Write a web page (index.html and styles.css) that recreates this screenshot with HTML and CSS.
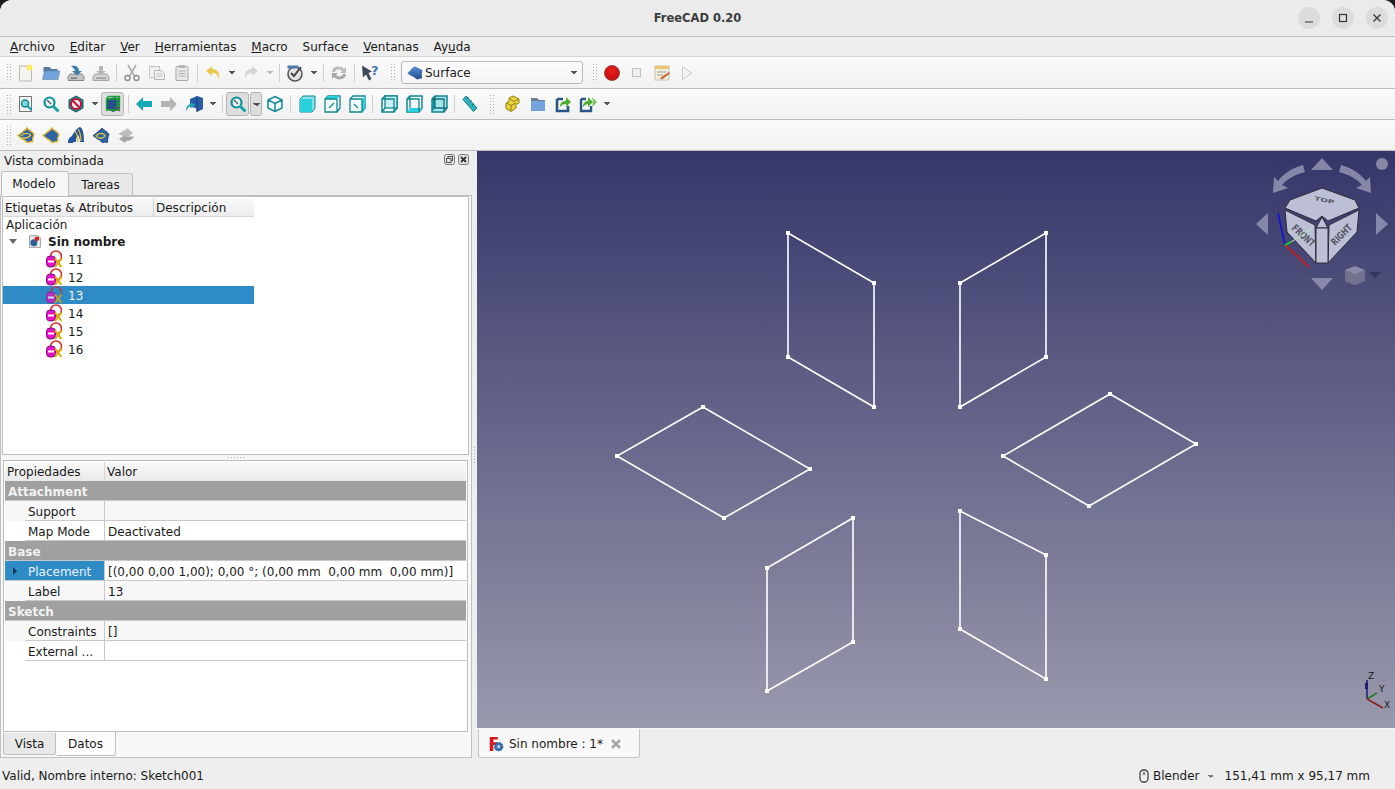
FILE: index.html
```html
<!DOCTYPE html>
<html lang="es">
<head>
    <meta charset="UTF-8">
    <title>FreeCAD 0.20</title>
    <link rel="stylesheet" href="styles.css">
</head>
<body>

<svg class="defs" width="0" height="0">
    <defs>
        <linearGradient id="flag" x1="0" y1="0" x2="0" y2="1"><stop offset="0" stop-color="#5c8fd6"/><stop offset="1" stop-color="#1f4f8f"/></linearGradient>
        <symbol id="i-new" viewBox="0 0 18 18"><rect x="2.500" y="2" width="12" height="15" fill="#f4f3ee" stroke="#b8b8b8"/><circle cx="12.500" cy="3.500" r="3" fill="#ffe95c"/></symbol>
        <symbol id="i-open" viewBox="0 0 18 18"><path d="M1.500 3h6l2 2h6v3h-14z" fill="#56799f"/><path d="M2.500 7H18l-2 8.500H.5z" fill="#74a4dc" stroke="#5d86b5" stroke-width=".6"/></symbol>
        <symbol id="i-save" viewBox="0 0 18 18"><path d="M3 10h12l2 3v3.500H1V13z" fill="#c4c4c4" stroke="#8a8a8a"/><rect x="4" y="13.500" width="6" height="1.500" fill="#777"/><path d="M4 2c5-1 8 1 8 5h3l-5 4.500L5 7h3c0-2-2-3-4-5z" fill="#3d7bb0"/></symbol>
        <symbol id="i-saveas" viewBox="0 0 18 18"><path d="M3 10h12l2 3v3.500H1V13z" fill="#d2d2d2" stroke="#a5a5a5"/><rect x="4" y="13.500" width="10" height="1.500" fill="#9a9a9a"/><path d="M7 2h4v5h3l-5 4-5-4h3z" fill="#b5b5b5"/></symbol>
        <symbol id="i-cut" viewBox="0 0 18 18"><path d="M5 1l7 12M13 1L6 13" stroke="#adadad" stroke-width="1.6" fill="none"/><circle cx="4.500" cy="14" r="2.500" fill="none" stroke="#8f8f8f" stroke-width="1.400"/><circle cx="13.500" cy="14" r="2.500" fill="none" stroke="#8f8f8f" stroke-width="1.400"/></symbol>
        <symbol id="i-copy" viewBox="0 0 18 18"><rect x="1.500" y="2.500" width="10" height="11" fill="#f0f0f0" stroke="#c4c4c4"/><path d="M6.500 6.500h7l3 3v6h-10z" fill="#efefef" stroke="#b5b5b5"/><path d="M8.500 10h6M8.500 12h6" stroke="#c4c4c4"/></symbol>
        <symbol id="i-paste" viewBox="0 0 18 18"><rect x="3" y="2.500" width="12" height="14" rx="1" fill="#e8e8e6" stroke="#a5a5a5"/><rect x="6" y="1" width="6" height="3" fill="#b5b5b5"/><path d="M5.500 7h7M5.500 9.500h7M5.500 12h7" stroke="#b0b0b0"/></symbol>
        <symbol id="i-undo" viewBox="0 0 18 18"><path d="M2 7l6-5v3c5 0 8 3 7 10-1-4-3-6-7-6v3z" fill="#ecc84a" stroke="#e6e2b0" stroke-width=".6"/></symbol>
        <symbol id="i-redo" viewBox="0 0 18 18"><path d="M16 7l-6-5v3C5 5 2 8 3 15c1-4 3-6 7-6v3z" fill="#d5d5d5"/></symbol>
        <symbol id="i-check" viewBox="0 0 18 18"><circle cx="9" cy="10" r="7" fill="#e4e4e4" stroke="#555" stroke-width="1.600"/><path d="M1.500 1.500h11v3h-11z" fill="#4d78a8"/><path d="M5 9l3 3 7-9" fill="none" stroke="#444" stroke-width="2"/></symbol>
        <symbol id="i-refresh" viewBox="0 0 18 18"><path d="M2 8c0-6 9-7 12-3l2-2v6h-6l2-2c-2-2-6-2-7 1z" fill="#bdbdbd"/><path d="M16 10c0 6-9 7-12 3l-2 2V9h6l-2 2c2 2 6 2 7-1z" fill="#a8a8a8"/></symbol>
        <symbol id="i-what" viewBox="0 0 18 18"><path d="M1 1.500l10 6-3.500 1.500 3 6-2.500 1.500-3-6-3 3z" fill="#3e4a57"/><text x="10" y="11" class="qmark">?</text></symbol>
        <symbol id="i-surface" viewBox="0 0 18 18"><path d="M.5 9C3 8 5 3 9 1.500c2 2 5 2 8.500 4.500-1 3-1 6-.5 9-3 .5-5 2-7 .5C8 13 3 12 .5 9z" fill="url(#flag)"/></symbol>
        <symbol id="i-macro-edit" viewBox="0 0 18 18"><rect x="2" y="2" width="14" height="14" fill="#f2efe0" stroke="#c9c4b0"/><rect x="2" y="2" width="14" height="3" fill="#e9c46a"/><path d="M4 8h9M4 11h6" stroke="#9a9a90"/><path d="M7 14l9-6 1 1.500-8 6z" fill="#c9662f"/></symbol>
        <symbol id="i-play" viewBox="0 0 18 18"><path d="M4.500 2.500l9 6.500-9 6.500z" fill="#f4f4f4" stroke="#c8c8c8"/></symbol>

        <symbol id="i-fitall" viewBox="0 0 18 18"><rect x="2.500" y="1.500" width="12" height="15" fill="#f3f3f3" stroke="#777"/><circle cx="8" cy="8.500" r="3.500" fill="#7fd5dc" stroke="#138a94" stroke-width="1.500"/><path d="M10.500 11l4 4" stroke="#17a3ad" stroke-width="2.400"/></symbol>
        <symbol id="i-fitsel" viewBox="0 0 18 18"><circle cx="7.500" cy="7.500" r="5" fill="#eaf6f6" stroke="#0f8f9a" stroke-width="2.200"/><path d="M11 11l5.500 5.500" stroke="#17a3ad" stroke-width="3"/><path d="M5 5l4 4" stroke="#555" stroke-width="1.200"/></symbol>
        <symbol id="i-nodraw" viewBox="0 0 18 18"><path d="M9 1l7 4v8l-7 4-7-4V5z" fill="#1d8994" stroke="#0c5d66"/><circle cx="9" cy="9" r="5" fill="#eee" stroke="#c8102e" stroke-width="2"/><path d="M5.500 5.500l7 7" stroke="#c8102e" stroke-width="2"/></symbol>
        <symbol id="i-bbox" viewBox="0 0 18 18"><path d="M3 4l8-2 5 3v9l-7 3-6-3z" fill="#26508c"/><path d="M2.500 4h11v11h-11zM13.500 4l2-2.500M2.500 4l2-2.500h11v11l-2 2.500" fill="none" stroke="#1ea02e" stroke-width="1.400"/><path d="M11 11l5 5" stroke="#555" stroke-width="1.600"/></symbol>
        <symbol id="i-back" viewBox="0 0 18 18"><path d="M1 9l7-7v4h9v6H8v4z" fill="#18a9b8"/></symbol>
        <symbol id="i-fwd" viewBox="0 0 18 18"><path d="M17 9l-7-7v4H1v6h9v4z" fill="#b5b5b5"/></symbol>
        <symbol id="i-sync" viewBox="0 0 18 18"><path d="M5 4l7-3 6 2v11l-6 3-1-4-6-1z" fill="#2a5ca8"/><path d="M12 1.500v15.500" stroke="#163c78"/><path d="M1 16c0-4 2-7 5-7V7l4 3-4 3v-2c-2 0-3 2-5 5z" fill="#1ea6b5"/></symbol>
        <symbol id="i-iso" viewBox="0 0 18 18"><path d="M9 1.500l7 3.500v8l-7 3.500L2 13V5zM2 5l7 3.500L16 5M9 8.500v8" fill="#f2fbfb" stroke="#128692" stroke-width="1.500"/></symbol>
        <symbol id="i-front" viewBox="0 0 18 18"><path d="M2 4l3-3h12v12l-3 4H2z" fill="#85e2e8" stroke="#128692"/><rect x="2" y="4" width="12" height="13" fill="#2ad1dd"/></symbol>
        <symbol id="i-top" viewBox="0 0 18 18"><path d="M2 4l3-3h12v12l-3 4H2z" fill="#f2fbfb" stroke="#128692" stroke-width="1.300"/><path d="M2 4l3-3h12l-3 3z" fill="#2ad1dd"/><path d="M14 4v13M2 4h12M6 13l5-5" stroke="#128692" stroke-width="1.300" fill="none"/></symbol>
        <symbol id="i-right" viewBox="0 0 18 18"><path d="M2 4l3-3h12v12l-3 4H2z" fill="#f2fbfb" stroke="#128692" stroke-width="1.300"/><path d="M14 4l3-3v12l-3 4z" fill="#2ad1dd"/><path d="M14 4v13M2 4h12M6 9l4 4" stroke="#128692" stroke-width="1.300" fill="none"/></symbol>
        <symbol id="i-rear" viewBox="0 0 18 18"><path d="M2 4l3-3h12v12l-3 4H2z" fill="#f2fbfb" stroke="#128692" stroke-width="1.500"/><rect x="5" y="1" width="12" height="12" fill="#c8eff2" stroke="#128692" stroke-width="1.300"/><path d="M2 4h12v13M2 17l3-4" fill="none" stroke="#128692" stroke-width="1.300"/></symbol>
        <symbol id="i-bottom" viewBox="0 0 18 18"><path d="M2 4l3-3h12v12l-3 4H2z" fill="#f2fbfb" stroke="#128692" stroke-width="1.500"/><path d="M2 17l3-4h12l-3 4z" fill="#2ad1dd"/><path d="M5 1v12M2 4h12v13" fill="none" stroke="#128692" stroke-width="1.300"/></symbol>
        <symbol id="i-left" viewBox="0 0 18 18"><path d="M2 4l3-3h12v12l-3 4H2z" fill="#a5e4e9" stroke="#128692" stroke-width="1.500"/><path d="M2 4l3-3v12l-3 4z" fill="#148f9b"/><path d="M5 1v12h12M2 4h12v13" fill="none" stroke="#0f6f79" stroke-width="1.300"/></symbol>
        <symbol id="i-ruler" viewBox="0 0 18 18"><path d="M5 1l11 12-3.500 3.500L2 4.500z" fill="#2fb2bd" stroke="#14808a"/><path d="M6 4l2-1.500M8.500 7l2-1.500M11 10l2-1.500" stroke="#0d6d76"/></symbol>
        <symbol id="i-part" viewBox="0 0 18 18"><path d="M9 1l6 3v4l-3 1.500V13l-5 3.500-5-3V8l3-1.500V3z" fill="#ecd53c" stroke="#8f7d12"/><path d="M3 8l4 2.500V16M7 10.500L12 8M6 4l4 2.500 5-2.500" fill="none" stroke="#8f7d12"/></symbol>
        <symbol id="i-group" viewBox="0 0 18 18"><path d="M2 3h6l2 2h6v11H2z" fill="#6e7f92"/><rect x="2" y="6" width="14" height="10" fill="#73a3da"/></symbol>
        <symbol id="i-link" viewBox="0 0 18 18"><path d="M3 4h6M3 4v12h11v-5" fill="none" stroke="#2a5886" stroke-width="2.600"/><path d="M6 12c0-4 2-6 6-6V2l5 5-5 5V9c-3 0-4 1-6 3z" fill="#4fae2e"/></symbol>
        <symbol id="i-links" viewBox="0 0 18 18"><path d="M2 4h5M2 4v12h10v-5" fill="none" stroke="#2a5886" stroke-width="2.400"/><path d="M4 12c0-4 2-6 5-6V2l5 5-5 5V9c-2 0-3 1-5 3z" fill="#4fae2e"/><path d="M13 2l5 5-5 5 1.500-5z" fill="#6cc24a"/></symbol>

        <symbol id="i-s1" viewBox="0 0 18 18"><path d="M1 9.500C3 9 6 5 9 3.500l1-1.500c1 2 5 3 7 6.500-1 2-1.500 4-1.500 7-2-.5-4 1.500-6 .5-1-1.500-2-2.500-4-3z" fill="#2f62a8" stroke="#d6b62c" stroke-width="1.400"/><path d="M4 10c3-3 7-3 10-1M5 11.500c3 1 6 1 9-2.500" fill="none" stroke="#e6cb3c" stroke-width="1.300"/></symbol>
        <symbol id="i-s2" viewBox="0 0 18 18"><path d="M1 9.500C3 9 6 5 9 3.500l1-1.500c1 2 5 3 7 6.500-1 2-1.500 4-1.500 7-2-.5-4 1.500-6 .5-1-1.500-2-2.500-4-3z" fill="#2f62a8" stroke="#d6b62c" stroke-width="1.400"/></symbol>
        <symbol id="i-s3" viewBox="0 0 18 18"><path d="M1 16c0-3 2-5 4-6 2-4 5-8 8-9 3 1 4 8 4 15h-4c0-3-1-6-2-7-1 1-2 3-2 7z" fill="#22549f"/><path d="M8 5c2 3 3 7 3 11M11 3c2 3 3 7 3 12" fill="none" stroke="#e0c233" stroke-width="1.300"/><path d="M1 16h5" stroke="#22549f" stroke-width="2"/></symbol>
        <symbol id="i-s4" viewBox="0 0 18 18"><path d="M1 9.500C3 9 6 5 9 3.500l1-1.500c1 2 5 3 7 6.500-1 2-1.500 4-1.500 8-2-1-4 .5-6-.5-1-1.500-2-2.500-4-3z" fill="#2f62a8" stroke="#244a80"/><path d="M4 10c3-4 8-3 9 0-2 3-7 3-9 0z" fill="none" stroke="#e0c233" stroke-width="1.300"/></symbol>
        <symbol id="i-s5" viewBox="0 0 18 18"><path d="M1 8c3-1 5-4 8-4l1-2 6 5-6 5-1-2c-3 0-5-1-8-2z" fill="#bdbdbd"/><path d="M17 11c-3-1-5 0-8 0l-1-2-6 4 6 4 1-2c3 0 5-1 8-4z" fill="#a5a5a5"/></symbol>

        <symbol id="i-doc" viewBox="0 0 18 18"><path d="M2 1.500h11l3 3v12H2z" fill="#ececec" stroke="#8b8b8b"/><circle cx="7.500" cy="10.500" r="4.500" fill="#2d5f9c"/><circle cx="11.500" cy="5.500" r="3" fill="#d92020"/></symbol>
        <symbol id="i-sketch" viewBox="0 0 16 18"><circle cx="10" cy="6.500" r="5.500" fill="none" stroke="#d42a2a" stroke-width="1.500"/><rect x=".5" y="6" width="9" height="11" rx="3.500" fill="#e311c8" stroke="#8b0f80"/><rect x="2" y="10.500" width="6" height="2" fill="#fff"/><path d="M9 8.500l6.500 8.500M15.500 8.500L9 17" stroke="#dcb000" stroke-width="2"/></symbol>
        <symbol id="i-fc" viewBox="0 0 18 18"><path d="M2 1h9v3H6v3h4v3H6v7H2z" fill="#d6191f"/><circle cx="12" cy="12" r="4.500" fill="#3f78b8" stroke="#2a5a94" stroke-width="1.500" stroke-dasharray="2 1"/><circle cx="12" cy="12" r="1.500" fill="#dce8f5"/></symbol>
    </defs>
</svg>

<div class="window">

    <header class="titlebar">
        <span class="title">FreeCAD 0.20</span>
        <div class="winbtns">
            <button class="winbtn"><svg width="12" height="12" viewBox="0 0 12 12"><path d="M2 10h8" stroke="#333" stroke-width="1.200"/></svg></button>
            <button class="winbtn"><svg width="12" height="12" viewBox="0 0 12 12"><rect x="2.500" y="2.500" width="7" height="7" fill="none" stroke="#333" stroke-width="1.200"/></svg></button>
            <button class="winbtn"><svg width="12" height="12" viewBox="0 0 12 12"><path d="M2.500 2.500l7 7M9.500 2.500l-7 7" stroke="#333" stroke-width="1.200"/></svg></button>
        </div>
    </header>

    <nav class="menubar">
        <span><u>A</u>rchivo</span>
        <span><u>E</u>ditar</span>
        <span><u>V</u>er</span>
        <span><u>H</u>erramientas</span>
        <span><u>M</u>acro</span>
        <span>Surface</span>
        <span><u>V</u>entanas</span>
        <span>Ay<u>u</u>da</span>
    </nav>

    <!-- File / edit toolbar -->
    <div class="toolbar tb1">
        <i class="grip"></i>
        <span class="tool"><svg><use href="#i-new"/></svg></span>
        <span class="tool"><svg><use href="#i-open"/></svg></span>
        <span class="tool"><svg><use href="#i-save"/></svg></span>
        <span class="tool"><svg><use href="#i-saveas"/></svg></span>
        <i class="sep"></i>
        <span class="tool"><svg><use href="#i-cut"/></svg></span>
        <span class="tool"><svg><use href="#i-copy"/></svg></span>
        <span class="tool"><svg><use href="#i-paste"/></svg></span>
        <i class="sep"></i>
        <span class="tool"><svg><use href="#i-undo"/></svg></span>
        <i class="drop"></i>
        <span class="tool"><svg><use href="#i-redo"/></svg></span>
        <i class="drop off"></i>
        <i class="sep"></i>
        <span class="tool"><svg><use href="#i-check"/></svg></span>
        <i class="drop"></i>
        <i class="sep"></i>
        <span class="tool"><svg><use href="#i-refresh"/></svg></span>
        <i class="sep"></i>
        <span class="tool"><svg><use href="#i-what"/></svg></span>
        <i class="grip gap"></i>
        <div class="combo">
            <svg><use href="#i-surface"/></svg>
            <span>Surface</span>
            <i class="drop"></i>
        </div>
        <i class="grip gap2"></i>
        <span class="tool"><span class="rec"></span></span>
        <span class="tool"><span class="stop"></span></span>
        <span class="tool"><svg><use href="#i-macro-edit"/></svg></span>
        <span class="tool"><svg><use href="#i-play"/></svg></span>
    </div>

    <!-- View toolbar -->
    <div class="toolbar tb2">
        <i class="grip"></i>
        <span class="tool"><svg><use href="#i-fitall"/></svg></span>
        <span class="tool"><svg><use href="#i-fitsel"/></svg></span>
        <span class="tool"><svg><use href="#i-nodraw"/></svg></span>
        <i class="drop narrow"></i>
        <span class="tool on"><svg><use href="#i-bbox"/></svg></span>
        <i class="sep"></i>
        <span class="tool"><svg><use href="#i-back"/></svg></span>
        <span class="tool"><svg><use href="#i-fwd"/></svg></span>
        <span class="tool"><svg><use href="#i-sync"/></svg></span>
        <i class="drop"></i>
        <i class="sep"></i>
        <span class="tool on wide"><svg><use href="#i-fitsel"/></svg></span>
        <i class="drop boxed"></i>
        <span class="tool"><svg><use href="#i-iso"/></svg></span>
        <i class="sep wider"></i>
        <span class="tool"><svg><use href="#i-front"/></svg></span>
        <span class="tool"><svg><use href="#i-top"/></svg></span>
        <span class="tool"><svg><use href="#i-right"/></svg></span>
        <i class="sep wider"></i>
        <span class="tool"><svg><use href="#i-rear"/></svg></span>
        <span class="tool"><svg><use href="#i-bottom"/></svg></span>
        <span class="tool"><svg><use href="#i-left"/></svg></span>
        <i class="sep"></i>
        <span class="tool"><svg><use href="#i-ruler"/></svg></span>
        <i class="grip gap3"></i>
        <span class="tool"><svg><use href="#i-part"/></svg></span>
        <span class="tool"><svg><use href="#i-group"/></svg></span>
        <span class="tool"><svg><use href="#i-link"/></svg></span>
        <span class="tool"><svg><use href="#i-links"/></svg></span>
        <i class="drop narrow"></i>
    </div>

    <!-- Surface toolbar -->
    <div class="toolbar tb3">
        <i class="grip"></i>
        <span class="tool"><svg><use href="#i-s1"/></svg></span>
        <span class="tool"><svg><use href="#i-s2"/></svg></span>
        <span class="tool"><svg><use href="#i-s3"/></svg></span>
        <span class="tool"><svg><use href="#i-s4"/></svg></span>
        <span class="tool"><svg><use href="#i-s5"/></svg></span>
    </div>

    <div class="main">

        <!-- Combo view dock -->
        <aside class="dock">
            <div class="dock-title">
                <span>Vista combinada</span>
                <div class="dock-btns">
                    <i><svg width="11" height="11" viewBox="0 0 11 11"><rect x=".5" y=".5" width="10" height="10" rx="2" fill="#e4e4e4" stroke="#777"/><rect x="4" y="2.500" width="4.500" height="4" fill="none" stroke="#555"/><rect x="2.500" y="4.500" width="4.500" height="4" fill="#e4e4e4" stroke="#555"/></svg></i>
                    <i><svg width="11" height="11" viewBox="0 0 11 11"><rect x=".5" y=".5" width="10" height="10" rx="2" fill="#e4e4e4" stroke="#777"/><path d="M3 3l5 5M8 3L3 8" stroke="#333" stroke-width="1.800"/></svg></i>
                </div>
            </div>
            <div class="tabs">
                <span class="tab active">Modelo</span>
                <span class="tab">Tareas</span>
            </div>
            <div class="tab-pane">
                <div class="tree">
                    <div class="tree-head">
                        <span class="col-a">Etiquetas &amp; Atributos</span>
                        <span class="col-b">Descripción</span>
                    </div>
                    <div class="tree-app">Aplicación</div>
                    <div class="tree-doc">
                        <i class="twisty"></i>
                        <svg class="doc-icon"><use href="#i-doc"/></svg>
                        <b>Sin nombre</b>
                    </div>
                    <div class="tree-item"><svg><use href="#i-sketch"/></svg><span>11</span></div>
                    <div class="tree-item"><svg><use href="#i-sketch"/></svg><span>12</span></div>
                    <div class="tree-item selected"><svg><use href="#i-sketch"/></svg><span>13</span></div>
                    <div class="tree-item"><svg><use href="#i-sketch"/></svg><span>14</span></div>
                    <div class="tree-item"><svg><use href="#i-sketch"/></svg><span>15</span></div>
                    <div class="tree-item"><svg><use href="#i-sketch"/></svg><span>16</span></div>
                </div>
                <div class="split-h"></div>
                <div class="props">
                    <div class="prop-head">
                        <span>Propiedades</span>
                        <span>Valor</span>
                    </div>
                    <div class="prop-group">Attachment</div>
                    <div class="prop alt"><span class="key">Support</span><span class="val"></span></div>
                    <div class="prop"><span class="key">Map Mode</span><span class="val">Deactivated</span></div>
                    <div class="prop-group">Base</div>
                    <div class="prop current"><span class="key">Placement</span><span class="val">[(0,00 0,00 1,00); 0,00 °; (0,00 mm&nbsp; 0,00 mm&nbsp; 0,00 mm)]</span></div>
                    <div class="prop alt"><span class="key">Label</span><span class="val">13</span></div>
                    <div class="prop-group">Sketch</div>
                    <div class="prop alt"><span class="key">Constraints</span><span class="val">[]</span></div>
                    <div class="prop"><span class="key">External ...</span><span class="val"></span></div>
                </div>
                <div class="bottom-tabs">
                    <span class="btab">Vista</span>
                    <span class="btab active">Datos</span>
                </div>
            </div>
        </aside>

        <div class="split-v"></div>

        <section class="viewer">
            <div class="canvas">
                <svg class="sketch" viewBox="477 151 918 577" width="918" height="577">
                    <g class="wire">
                        <polygon points="788,233 874,283 874,407 788,357"/>
                        <polygon points="1046,233 960,283 960,407 1046,357"/>
                        <polygon points="703,407 810,469 724,518 617,456"/>
                        <polygon points="1110,394 1196,444 1089,506 1003,456"/>
                        <polygon points="853,518 853,642 767,691 767,568"/>
                        <polygon points="960,511 1046,555 1046,679 960,629"/>
                    </g>
                    <g class="verts">
                        <rect x="786" y="231" width="4" height="4"/><rect x="872" y="281" width="4" height="4"/><rect x="872" y="405" width="4" height="4"/><rect x="786" y="355" width="4" height="4"/>
                        <rect x="1044" y="231" width="4" height="4"/><rect x="958" y="281" width="4" height="4"/><rect x="958" y="405" width="4" height="4"/><rect x="1044" y="355" width="4" height="4"/>
                        <rect x="701" y="405" width="4" height="4"/><rect x="808" y="467" width="4" height="4"/><rect x="722" y="516" width="4" height="4"/><rect x="615" y="454" width="4" height="4"/>
                        <rect x="1108" y="392" width="4" height="4"/><rect x="1194" y="442" width="4" height="4"/><rect x="1087" y="504" width="4" height="4"/><rect x="1001" y="454" width="4" height="4"/>
                        <rect x="851" y="516" width="4" height="4"/><rect x="851" y="640" width="4" height="4"/><rect x="765" y="689" width="4" height="4"/><rect x="765" y="566" width="4" height="4"/>
                        <rect x="958" y="509" width="4" height="4"/><rect x="1044" y="553" width="4" height="4"/><rect x="1044" y="677" width="4" height="4"/><rect x="958" y="627" width="4" height="4"/>
                    </g>

                    <!-- Navigation cube -->
                    <g class="nav-arrows">
                        <polygon points="1322,158 1311,170 1333,170"/>
                        <circle cx="1382" cy="164" r="6"/>
                        <path d="M1305,172 C1294,175 1286,180 1282,185 L1288,188 L1273,193 L1274,177 L1278,181 C1283,174 1292,168 1303,165 Z"/>
                        <path d="M1339,172 C1350,175 1358,180 1362,185 L1356,188 L1371,193 L1370,177 L1366,181 C1361,174 1352,168 1341,165 Z"/>
                        <polygon points="1256,224 1268,213 1268,235"/>
                        <polygon points="1388,224 1376,213 1376,235"/>
                        <polygon points="1311,278 1333,278 1322,290"/>
                    </g>
                    <g class="mini-cube">
                        <polygon points="1345,270 1355,266 1365,270 1365,281 1355,285 1345,281"/>
                        <polygon class="shade" points="1345,270 1355,274 1365,270 1365,281 1355,285 1345,281"/>
                    </g>
                    <polygon class="mini-arrow" points="1369,272 1381,272 1375,278"/>
                    <g class="cube">
                        <polygon points="1285,208 1290,200 1322,188 1355,200 1359,208 1328,221 1322,216 1316,221"/>
                        <polygon points="1285,210 1315,225 1316,263 1287,232"/>
                        <polygon points="1359,210 1329,225 1328,263 1357,232"/>
                        <polygon points="1322,217 1316,228 1328,228"/>
                        <polygon points="1316,228 1328,228 1328,263 1316,263"/>
                    </g>
                    <text class="cube-label" transform="translate(1324,202) rotate(12) scale(1,.6)" text-anchor="middle">TOP</text>
                    <text class="cube-label" transform="translate(1291,229) rotate(42) scale(.8,1.1)">FRONT</text>
                    <text class="cube-label" transform="translate(1335,246) rotate(-45) scale(.8,1.1)">RIGHT</text>
                    <path d="M1285,245 L1278,213" class="ax-b"/>
                    <path d="M1285,245 L1309,267" class="ax-r"/>
                    <path d="M1285,245 L1291,242" class="ax-g"/>
                    <path d="M1291,242 L1313,228" class="ax-g2"/>

                    <!-- Corner axis -->
                    <path d="M1367,699 V680" class="cx-b"/><rect x="1365" y="683" width="3" height="6" fill="#1f1f7a"/>
                    <path d="M1367,699 L1377,693" class="cx-g"/>
                    <path d="M1367,699 L1383,708" class="cx-r"/>
                    <text x="1368" y="679" class="cx-text">Z</text>
                    <text x="1379" y="692" class="cx-text">Y</text>
                    <text x="1384" y="708" class="cx-text">X</text>
                </svg>
            </div>
            <div class="doc-tabs">
                <div class="doc-tab">
                    <svg><use href="#i-fc"/></svg>
                    <span>Sin nombre : 1*</span>
                    <svg class="close" viewBox="0 0 12 12"><path d="M2 2l8 8M10 2l-8 8" stroke="#a5a5a5" stroke-width="2.600"/></svg>
                </div>
            </div>
        </section>
    </div>

    <footer class="statusbar">
        <span class="msg">Valid, Nombre interno: Sketch001</span>
        <svg class="mouse" width="10" height="14" viewBox="0 0 10 14"><rect x="1" y="1" width="8" height="12" rx="3.500" fill="none" stroke="#444" stroke-width="1.300"/><path d="M5 3v3" stroke="#444" stroke-width="1.300"/></svg>
        <span class="nav-style">Blender</span>
        <i class="drop tiny"></i>
        <span class="dims">151,41 mm x 95,17 mm</span>
    </footer>
</div>

</body>
</html>
```

FILE: styles.css
```css
/* FreeCAD main window */
* {
    box-sizing: border-box;
}
html, body {
    margin: 0;
    padding: 0;
    background-color: #1c1c1c;
}
body {
    font-family: "DejaVu Sans", sans-serif;
    font-size: 12px;
    color: #1a1a1a;
    overflow: hidden;
}
i {
    display: block;
    font-style: normal;
}
.defs {
    position: absolute;
}
.window {
    width: 1395px;
    height: 789px;
    display: flex;
    flex-direction: column;
    background-color: #eeeeee;
    border-radius: 12px 12px 0 0;
    overflow: hidden;
}

/* Title bar */
.titlebar {
    height: 37px;
    flex: none;
    display: flex;
    align-items: center;
    justify-content: center;
    position: relative;
    background-color: #ebebeb;
    border-bottom: 1px solid #c0c0c0;
}
.title {
    font-weight: bold;
    font-size: 11.5px;
    color: #3d3d3d;
    margin-top: -1px;
}
.winbtns {
    position: absolute;
    right: 7px;
    top: 7px;
    display: flex;
    gap: 12px;
}
.winbtn {
    width: 22px;
    height: 22px;
    padding: 0;
    border: none;
    border-radius: 50%;
    background-color: #dcdcdc;
    display: flex;
    align-items: center;
    justify-content: center;
}

/* Menu bar */
.menubar {
    height: 20px;
    flex: none;
    display: flex;
    align-items: center;
    gap: 14.9px;
    padding-left: 10px;
    background-color: #eeeeee;
    border-bottom: 1px solid #d4d4d4;
}

/* Toolbars */
.toolbar {
    flex: none;
    display: flex;
    align-items: center;
    padding-left: 5px;
    background: linear-gradient(#fbfbfb, #f1f1f1);
    border-bottom: 1px solid #bdbdbd;
}
.tb1 {
    height: 32px;
}
.tb2 {
    height: 31px;
}
.tb3 {
    height: 31px;
}
.grip {
    width: 8px;
    height: 20px;
    background-image: radial-gradient(#b0b0b0 0.7px, transparent 0.8px);
    background-size: 3px 3px;
    background-position: 1px 0;
    background-repeat: repeat;
    clip-path: inset(0 1px);
}
.grip.gap {
    margin: 0 4px 0 7px;
}
.grip.gap2 {
    margin: 0 0 0 8px;
}
.grip.gap3 {
    margin: 0 4px 0 6px;
}
.tool {
    width: 25px;
    height: 25px;
    flex: none;
    display: flex;
    align-items: center;
    justify-content: center;
}
.tool svg {
    width: 18px;
    height: 18px;
}
.tool.on {
    width: 23px;
    height: 24px;
    margin: 0 1px;
    background-color: #dedede;
    border: 1px solid #b4b4b4;
    border-radius: 3px;
}
.tool.wide {
    width: 23px;
}
.sep {
    width: 6px;
    height: 18px;
    flex: none;
    background: linear-gradient(#cfcfcf, #cfcfcf) center / 1px 100% no-repeat;
}
.sep.wider {
    width: 7px;
}
.drop {
    width: 13px;
    height: 24px;
    flex: none;
    background: linear-gradient(135deg, transparent 50%, #555 50%) no-repeat, linear-gradient(225deg, transparent 50%, #555 50%) no-repeat;
    background-size: 4px 4px;
    background-position: 2.5px 10px, 6.5px 10px;
    transform: scaleY(-1);
}
.drop.off {
    opacity: 0.35;
}
.drop.narrow {
    width: 12px;
}
.drop.boxed {
    width: 12px;
    transform: none;
    background-image: linear-gradient(45deg, transparent 50%, #555 50%), linear-gradient(-45deg, transparent 50%, #555 50%), linear-gradient(#dedede, #dedede);
    background-size: 4px 4px, 4px 4px, 100% 100%;
    background-position: 2px 10px, 6px 10px, 0 0;
    border: 1px solid #b4b4b4;
    border-radius: 3px;
}
.drop.tiny {
    height: 14px;
    background-position: 3px 5px, 6px 5px;
    background-size: 3px 3px;
    opacity: 0.7;
}
.combo {
    width: 182px;
    height: 23px;
    flex: none;
    display: flex;
    align-items: center;
    padding-left: 5px;
    background: linear-gradient(#fcfcfc, #f4f4f4);
    border: 1px solid #b9b9b9;
    border-radius: 3px;
}
.combo svg {
    width: 16px;
    height: 16px;
    margin-right: 2px;
}
.combo .drop {
    margin-left: auto;
    margin-right: 2px;
}
.rec {
    width: 16px;
    height: 16px;
    border-radius: 50%;
    background: radial-gradient(circle at 50% 35%, #ea1c1c, #b80d0d);
    border: 1px solid #a03a3a;
}
.stop {
    width: 9px;
    height: 9px;
    background-color: #f0f0f0;
    border: 1px solid #c0c0c0;
}

/* Main area */
.main {
    height: 608px;
    flex: none;
    display: flex;
}
.dock {
    width: 472px;
    flex: none;
    display: flex;
    flex-direction: column;
}
.dock-title {
    height: 19px;
    flex: none;
    display: flex;
    align-items: center;
    justify-content: space-between;
    padding: 0 3px 0 4px;
}
.dock-btns {
    display: flex;
    gap: 3px;
    margin-top: 1px;
}
.tabs {
    height: 25px;
    flex: none;
    display: flex;
    align-items: flex-end;
    padding-left: 1px;
    position: relative;
    z-index: 1;
}
.tab {
    width: 64px;
    height: 22px;
    display: flex;
    align-items: center;
    justify-content: center;
    background-color: #e8e8e8;
    border: 1px solid #c0c0c0;
    border-left: none;
    border-bottom: none;
    border-radius: 0 3px 0 0;
}
.tab.active {
    width: 68px;
    height: 25px;
    margin-bottom: -1px;
    padding-right: 2px;
    background-color: #f7f7f7;
    border-left: 1px solid #c0c0c0;
    border-radius: 3px 3px 0 0;
}
.tab-pane {
    flex: 1;
    display: flex;
    flex-direction: column;
    background-color: #f7f7f7;
    border: 1px solid #c0c0c0;
    margin-bottom: 1px;
    padding: 0 2px 0 1px;
}

/* Model tree */
.tree {
    height: 259px;
    flex: none;
    background-color: #ffffff;
    border: 1px solid #bdbdbd;
}
.tree-head {
    width: 251px;
    height: 19px;
    margin-top: 1px;
    display: flex;
    background: linear-gradient(#fafafa, #ececec);
    border-bottom: 1px solid #d8d8d8;
    line-height: 20px;
}
.tree-head span {
    display: block;
    padding-left: 2px;
}
.col-a {
    width: 151px;
    border-right: 1px solid #d0d0d0;
}
.tree-app {
    height: 16px;
    line-height: 16px;
    padding-left: 3px;
}
.tree-doc {
    height: 17px;
    display: flex;
    align-items: center;
}
.twisty {
    width: 0;
    height: 0;
    margin-left: 6px;
    border-left: 4px solid transparent;
    border-right: 4px solid transparent;
    border-top: 5px solid #666666;
}
.doc-icon {
    width: 14px;
    height: 15px;
    margin: 0 6px 0 11px;
    flex: none;
}
.tree-item {
    width: 251px;
    height: 18px;
    display: flex;
    align-items: center;
    padding-left: 43px;
    gap: 6px;
}
.tree-item span {
    margin-top: 2px;
}
.tree-item svg {
    width: 16px;
    height: 18px;
    flex: none;
}
.tree-item.selected {
    background-color: #2e8bc6;
    color: #f2f2f2;
}
.tree-item.selected svg {
    opacity: 0.75;
}

.split-h {
    height: 5px;
    flex: none;
    display: flex;
    align-items: center;
    justify-content: center;
}
.split-h::before {
    content: "";
    width: 16px;
    height: 1px;
    background: repeating-linear-gradient(90deg, #b0b0b0 0 1px, transparent 1px 3px);
}

/* Property editor */
.props {
    height: 272px;
    flex: none;
    margin: 0 1px;
    padding: 1px;
    background-color: #ffffff;
    border: 1px solid #bdbdbd;
}
.prop-head {
    height: 19px;
    display: grid;
    grid-template-columns: 99px 1fr;
    grid-template-rows: 19px;
    line-height: 21px;
    background: linear-gradient(#fafafa, #e9e9e9);
}
.prop-head span {
    padding-left: 2px;
}
.prop-head span + span {
    border-left: 1px solid #d4d4d4;
}
.prop-group {
    height: 20px;
    line-height: 22px;
    padding-left: 3px;
    font-weight: bold;
    color: #f2f2f2;
    background-color: #a0a0a0;
    border-bottom: 1px solid #c8c8c8;
    overflow: hidden;
}
.prop {
    height: 20px;
    display: grid;
    grid-template-columns: 99px 1fr;
    grid-template-rows: 20px;
    line-height: 23px;
    background-color: #ffffff;
}
.prop.alt {
    background-color: #f7f7f7;
}
.key {
    margin-left: 20px;
    padding-left: 3px;
    white-space: nowrap;
    border-bottom: 1px solid #c8c8c8;
    overflow: hidden;
}
.val {
    padding-left: 3px;
    white-space: nowrap;
    border-left: 1px solid #c8c8c8;
    border-bottom: 1px solid #c8c8c8;
    overflow: hidden;
}
.prop.current {
    position: relative;
}
.prop.current .key {
    margin-left: 0;
    padding-left: 23px;
    color: #e8f2fa;
    background-color: #2e8bc6;
}
.prop.current::before {
    content: "";
    position: absolute;
    left: 8px;
    top: 6px;
    border-top: 4px solid transparent;
    border-bottom: 4px solid transparent;
    border-left: 4px solid #123a55;
}
.bottom-tabs {
    flex: 1;
    display: flex;
    align-items: flex-start;
    padding-left: 1px;
}
.btab {
    width: 53px;
    height: 22px;
    margin-top: 1px;
    display: flex;
    align-items: center;
    justify-content: center;
    background-color: #e8e8e8;
    border: 1px solid #c0c0c0;
    border-top: none;
    border-radius: 0 0 3px 3px;
}
.btab.active {
    width: 60px;
    height: 24px;
    margin-top: 0;
    background-color: #fbfbfb;
    border-left: none;
}

.split-v {
    width: 5px;
    flex: none;
    display: flex;
    align-items: center;
    justify-content: center;
}
.split-v::before {
    content: "";
    width: 1px;
    height: 16px;
    background: repeating-linear-gradient(#b0b0b0 0 1px, transparent 1px 3px);
}

/* 3D view */
.viewer {
    flex: 1;
    display: flex;
    flex-direction: column;
}
.canvas {
    height: 577px;
    flex: none;
    background: linear-gradient(#36366a, #9999ad);
}
.sketch {
    display: block;
}
.wire polygon {
    fill: none;
    stroke: #ffffff;
    stroke-width: 1.6;
}
.verts rect {
    fill: #ffffff;
}
.nav-arrows {
    fill: #8f8fb0;
    opacity: 0.9;
}
.mini-cube {
    fill: #8a8aa8;
}
.mini-cube .shade {
    fill: #72728f;
}
.mini-arrow {
    fill: #35355e;
}
.cube polygon {
    fill: #bdbfd6;
    stroke: #2c2c38;
    stroke-width: 1;
    stroke-linejoin: round;
}
.cube-label {
    font-size: 9px;
    font-weight: bold;
    fill: #55555f;
}
.ax-b, .ax-r, .ax-g, .ax-g2, .cx-b, .cx-g, .cx-r {
    fill: none;
    stroke-width: 1.6;
}
.ax-b {
    stroke: #1010e0;
}
.ax-r {
    stroke: #e01010;
}
.ax-g {
    stroke: #10e010;
}
.ax-g2 {
    stroke: #b8eab8;
    stroke-width: 1;
}
.cx-b {
    stroke: #1f1f7a;
}
.cx-g {
    stroke: #2a7a2a;
}
.cx-r {
    stroke: #8a1f1f;
}
.cx-text {
    font-size: 9px;
    fill: #1a1a1a;
}
.qmark {
    font-size: 13px;
    font-weight: bold;
    fill: #3f78b8;
    font-family: "DejaVu Sans", sans-serif;
}
.doc-tabs {
    flex: 1;
    padding-left: 1px;
    border-top: 1px solid #f8f8f8;
    background-color: #eeeeee;
}
.doc-tab {
    width: 162px;
    height: 29px;
    display: flex;
    align-items: center;
    padding: 2px 0 0 9px;
    background-color: #f8f8f8;
    border: 1px solid #c4c4c4;
    border-top: none;
    border-radius: 0 0 3px 3px;
}
.doc-tab svg {
    width: 16px;
    height: 16px;
    margin-right: 5px;
    flex: none;
}
.doc-tab .close {
    width: 12px;
    height: 12px;
    margin: 0 0 0 7px;
}

/* Status bar */
.statusbar {
    flex: 1;
    display: flex;
    align-items: center;
    padding: 3px 25px 0 2px;
    background-color: #eeeeee;
}
.msg {
    margin-right: auto;
}
.mouse {
    margin-right: 4px;
}
.nav-style {
    margin-right: 5px;
}
.dims {
    margin-left: 7px;
}
```
